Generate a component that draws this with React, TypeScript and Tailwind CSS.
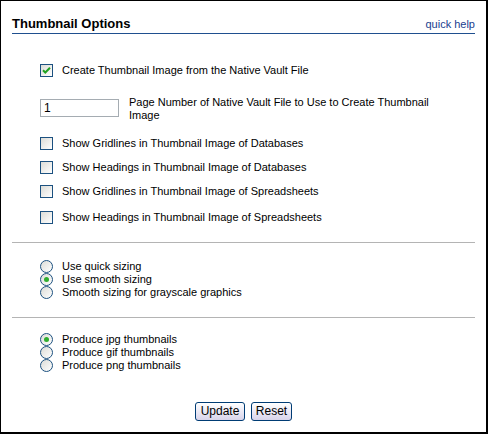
import React from "react";

const font = { fontFamily: '"Liberation Sans", Arial, sans-serif' };

const CheckBox = ({ checked }: { checked?: boolean }) => (
  <span className="relative inline-flex h-[13px] w-[13px] shrink-0 items-center justify-center border border-[#1c5180] bg-gradient-to-br from-[#dcdcd7] to-white">
    {checked && (
      <svg width="9" height="9" viewBox="0 0 9 9">
        <path d="M1 4.2 L3.3 6.5 L8 1.8" stroke="#21a121" strokeWidth="2" fill="none" />
      </svg>
    )}
  </span>
);

const Radio = ({ checked }: { checked?: boolean }) => (
  <span className="inline-flex h-[13px] w-[13px] shrink-0 items-center justify-center rounded-full border border-[#1c5180] bg-gradient-to-br from-[#dcdcd7] to-white">
    {checked && <span className="h-[5px] w-[5px] rounded-full bg-[#2fae2f]" />}
  </span>
);

const checkRows = [
  "Show Gridlines in Thumbnail Image of Databases",
  "Show Headings in Thumbnail Image of Databases",
  "Show Gridlines in Thumbnail Image of Spreadsheets",
  "Show Headings in Thumbnail Image of Spreadsheets",
];

const sizing = [
  { label: "Use quick sizing", on: false },
  { label: "Use smooth sizing", on: true },
  { label: "Smooth sizing for grayscale graphics", on: false },
];

const formats = [
  { label: "Produce jpg thumbnails", on: true },
  { label: "Produce gif thumbnails", on: false },
  { label: "Produce png thumbnails", on: false },
];

export default function App() {
  return (
    <div
      style={font}
      className="box-border h-[434px] w-[488px] border-b-2 border-l border-r-2 border-t border-black bg-white px-[11px] pt-[15px] text-[11px] text-black"
    >
      {/* Header */}
      <div className="flex items-baseline justify-between border-b border-[#1f4f8f] pb-[1px]">
        <span className="text-[13px] font-bold leading-[16px]">Thumbnail Options</span>
        <a className="text-[11px] leading-[13px] text-[#1a3d8f]">quick help</a>
      </div>

      {/* Checkbox options */}
      <div className="pl-[28px]">
        <label className="mt-[30px] flex h-[13px] items-center gap-[9px] leading-[13px]">
          <CheckBox checked />
          <span>Create Thumbnail Image from the Native Vault File</span>
        </label>

        <div className="mt-[19px] flex items-start">
          <input
            defaultValue="1"
            style={font}
            className="mt-[3px] h-[18px] w-[79px] border border-[#a5acb2] px-[3px] text-[12px] outline-none"
          />
          <span className="ml-[10px] w-[310px] leading-[13px]">
            Page Number of Native Vault File to Use to Create Thumbnail Image
          </span>
        </div>

        <div className="mt-[15px] flex flex-col gap-[11px]">
          {checkRows.map((t, i) => (
            <label key={i} className={`flex h-[13px] items-center gap-[9px] leading-[13px] ${i === 3 ? "mt-[2px]" : ""}`}>
              <CheckBox />
              <span>{t}</span>
            </label>
          ))}
        </div>
      </div>

      <div className="mt-[18px] h-px bg-[#b4b4b4]" />

      <div className="mt-[17px] pl-[28px]">
        {sizing.map((r) => (
          <label key={r.label} className="flex h-[13px] items-center gap-[9px] leading-[13px]">
            <Radio checked={r.on} />
            <span>{r.label}</span>
          </label>
        ))}
      </div>

      <div className="mt-[18px] h-px bg-[#b4b4b4]" />

      <div className="mt-[15px] pl-[28px]">
        {formats.map((r) => (
          <label key={r.label} className="flex h-[13px] items-center gap-[9px] leading-[13px]">
            <Radio checked={r.on} />
            <span>{r.label}</span>
          </label>
        ))}
      </div>

      {/* Buttons */}
      <div className="mt-[30px] flex justify-center gap-[6px]">
        <button
          style={font}
          className="h-[19px] w-[50px] rounded-[3px] border border-[#003c74] bg-gradient-to-b from-white to-[#d8d4ea] text-[12px] leading-[17px]"
        >
          Update
        </button>
        <button
          style={font}
          className="h-[19px] w-[41px] rounded-[3px] border border-[#003c74] bg-gradient-to-b from-white to-[#d8d4ea] text-[12px] leading-[17px]"
        >
          Reset
        </button>
      </div>
    </div>
  );
}
